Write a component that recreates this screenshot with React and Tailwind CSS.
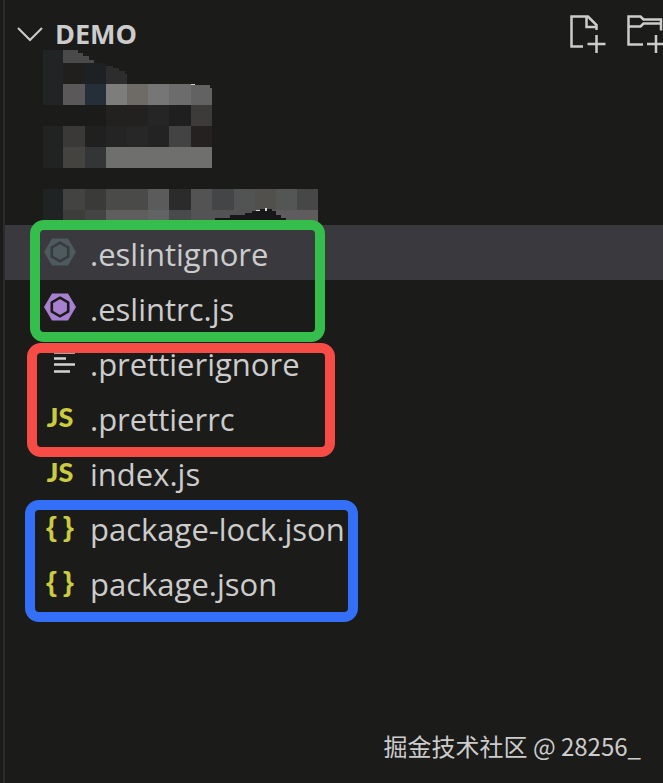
import { useState } from "react";

// Each mosaic cell is [x, y, width, height, color]
const mosaic = [
  [0, 0, 20, 55, "#212424"],
  [20, 34, 22, 21, "#5a5859"],
  [20, 13, 22, 21, "#211f1d"],
  [42, 13, 21, 21, "#1d2124"],
  [42, 34, 21, 21, "#252f3a"],
  [63, 34, 21, 21, "#7d7d7c"],
  [84, 34, 21, 21, "#6e6b67"],
  [105, 34, 21, 21, "#767676"],
  [126, 34, 22, 21, "#6c6c6c"],
  [63, 55, 42, 21, "#222120"],
  [105, 55, 21, 21, "#252525"],
  [126, 55, 22, 21, "#1f1f1f"],
  [148, 55, 21, 21, "#3c3b3a"],
  [0, 76, 20, 42, "#202322"],
  [20, 76, 22, 21, "#3b3937"],
  [42, 76, 21, 21, "#202020"],
  [63, 76, 21, 21, "#242424"],
  [84, 76, 21, 21, "#272727"],
  [105, 76, 21, 21, "#232323"],
  [126, 76, 22, 21, "#434343"],
  [148, 76, 21, 21, "#252120"],
  [20, 97, 22, 21, "#454340"],
  [42, 97, 21, 21, "#333536"],
  [63, 97, 106, 21, "#6f6f6e"],
  [0, 139, 20, 36, "#202323"],
  [20, 139, 22, 21, "#434341"],
  [42, 139, 21, 21, "#3a3a3a"],
  [63, 139, 42, 21, "#4a4a49"],
  [105, 139, 21, 21, "#5b5b5c"],
  [126, 139, 22, 21, "#2b2b2c"],
  [148, 139, 21, 21, "#535353"],
  [169, 139, 22, 21, "#444546"],
  [191, 139, 21, 21, "#525353"],
  [212, 139, 21, 21, "#51504c"],
  [233, 139, 21, 21, "#545555"],
  [254, 139, 21, 21, "#474747"],
  [20, 160, 22, 15, "#3d3d3a"],
  [42, 160, 21, 15, "#444444"],
  [63, 160, 42, 15, "#5f5e5d"],
  [105, 160, 21, 15, "#626365"],
  [126, 160, 22, 15, "#484a4b"],
  [148, 160, 63, 15, "#545353"],
  [211, 160, 64, 15, "#5e5c5c"],
];

const groups = [
  {
    outline: "left-[25px] w-[295px] -top-[5px] -bottom-[7px] border-[#35be4b]",
    files: [
      { name: ".eslintignore", icon: "eslint", tone: "text-[#4d5a5e]", hole: "#3a3a3f" },
      { name: ".eslintrc.js", icon: "eslint", tone: "text-[#a880d0]", hole: "#1b1b1a" },
    ],
  },
  {
    outline: "left-[22px] w-[308px] top-2 -bottom-3 border-[#f64c45]",
    files: [
      { name: ".prettierignore", icon: "lines" },
      { name: ".prettierrc", icon: "js" },
    ],
  },
  { files: [{ name: "index.js", icon: "js" }] },
  {
    outline: "left-[20px] w-[333px] top-0 -bottom-3 border-[#3370f7]",
    files: [
      { name: "package-lock.json", icon: "json" },
      { name: "package.json", icon: "json" },
    ],
  },
];

function Mosaic() {
  return (
    <svg width="275" height="175" viewBox="0 0 275 175" className="ml-[38px] block" shapeRendering="crispEdges" aria-hidden="true">
      {mosaic.map(([x, y, w, h, fill]) => (
        <rect key={`${x}-${y}`} x={x} y={y} width={w} height={h} fill={fill} />
      ))}
      <path d="M20 0h15v3h5v3h6v4h5v3H20z" fill="#4b4a4a" />
      <path d="M63 16h7v2h6v3h6v3h2v10H63z" fill="#2d2d2d" />
      <path d="M148 35h19v3h2v17h-21z" fill="#626262" />
      <path d="M148 34h4v1h-4z" fill="#d0d0d0" />
      <path d="M172 170v-2h15v-3h15v-2h7v-2h8v-2h12v2h4v4h5v3h5v2z" fill="#171717" />
      <path d="M213 160h4v1h-4zM222 158h2v3h-2z" fill="#d8d8d8" />
    </svg>
  );
}

function FileIcon({ icon, tone, hole }) {
  if (icon === "eslint") {
    return (
      <svg width="32" height="28" viewBox="0 0 32 28" className={tone} aria-hidden="true">
        <path d="M8 0.500h16L32 14l-8 13.500H8L0 14z" fill="currentColor" />
        <path d="M16 4.700l8.200 4.700v9.200L16 23.300l-8.200-4.700V9.400z" fill="none" stroke={hole} strokeWidth="2.600" />
      </svg>
    );
  }
  if (icon === "lines") {
    return (
      <svg width="32" height="28" viewBox="0 0 32 28" className="text-[#d4d4d4]" aria-hidden="true">
        <path d="M10 4.500h21M10 10.500h12M10 16.500h21M10 23.500h16" stroke="currentColor" strokeWidth="2.500" />
      </svg>
    );
  }
  if (icon === "js") {
    return (
      <span aria-hidden="true" className="font-['Lato',sans-serif] text-[27px] leading-7 font-black text-[#cbcb41]">
        JS
      </span>
    );
  }
  return (
    <span
      aria-hidden="true"
      className="flex gap-1.5 font-['Liberation_Sans',sans-serif] text-[28px] leading-7 font-bold text-[#cbcb41]"
    >
      <span>{"{"}</span>
      <span>{"}"}</span>
    </span>
  );
}

export default function App() {
  const [selected, setSelected] = useState(".eslintignore");
  const [open, setOpen] = useState(true);

  return (
    <div className="min-h-screen overflow-hidden bg-[#1b1b1a] pl-[3px] flex font-['Open_Sans','Noto_Sans',sans-serif] text-[#cccccc]">
      <div className="flex min-w-0 flex-1 flex-col border-l-2 border-[#2b2b2b]">
        {/* Folder header */}
        <header className="flex h-[50px] items-start pt-3.5">
          <button
            type="button"
            aria-expanded={open}
            onClick={() => setOpen(!open)}
            className="flex items-center gap-2 pl-3 text-[27px] leading-10 font-bold"
          >
            <svg width="30" height="20" viewBox="0 0 30 20" fill="none" stroke="currentColor" strokeWidth="2" aria-hidden="true">
              <path d="M1 4l12 12L25 4" />
            </svg>
            DEMO
          </button>
          <div className="-mr-1 ml-auto flex shrink-0 gap-4">
            <button type="button" aria-label="New File">
              <svg width="40" height="40" viewBox="0 0 40 40" fill="none" stroke="currentColor" strokeWidth="2.500">
                <path d="M16 32.500H4.500v-30H21l8.500 8.500v5M19.500 2.500V13H30M29.500 21v18M20.500 30h18" />
              </svg>
            </button>
            <button type="button" aria-label="New Folder">
              <svg width="44" height="40" viewBox="0 0 44 40" fill="none" stroke="currentColor" strokeWidth="2.500">
                <path d="M20 30.500H5.500v-28h12l3 3H38v11M5.500 12.500h12l3-3H38M33 21v18M24 30h18" />
              </svg>
            </button>
          </div>
        </header>

        {/* File tree */}
        {open && (
          <main>
            <Mosaic />
            {groups.map((group) => (
              <div key={group.files[0].name} className="relative">
                <ul>
                  {group.files.map((file) => (
                    <li key={file.name}>
                      <button
                        type="button"
                        onClick={() => setSelected(file.name)}
                        className={`flex h-[55px] w-full items-center pt-0.5 pl-[39px] text-left ${
                          selected === file.name ? "bg-[#39393e]" : ""
                        }`}
                      >
                        <span className="mr-3.5 flex w-8 shrink-0 justify-center pb-1">
                          <FileIcon icon={file.icon} tone={file.tone} hole={file.hole} />
                        </span>
                        <span className="text-[31px] leading-10 whitespace-nowrap">{file.name}</span>
                      </button>
                    </li>
                  ))}
                </ul>
                {group.outline && (
                  <div className={`pointer-events-none absolute z-10 rounded-[14px] border-[10px] ${group.outline}`} />
                )}
              </div>
            ))}
          </main>
        )}

        <footer className="mt-auto pr-[22px] pb-[21px] text-right font-['Noto_Sans_CJK_SC',sans-serif] text-2xl">
          掘金技术社区 @ 28256_
        </footer>
      </div>
    </div>
  );
}
